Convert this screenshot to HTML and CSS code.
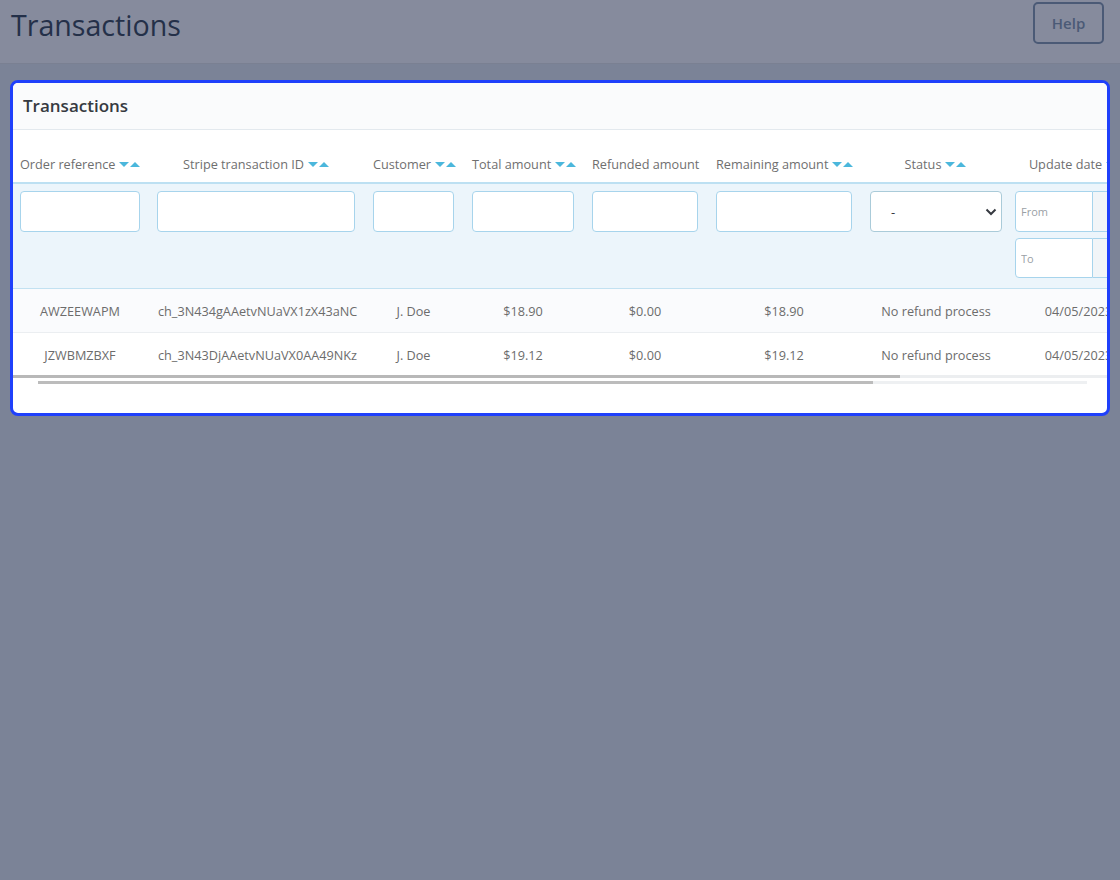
FILE: index.html
```html
<!DOCTYPE html>
<html lang="en">
<head>
    <meta charset="UTF-8">
    <title>Transactions</title>
    <link rel="stylesheet" href="styles.css">
</head>
<body>

    <header class="page-head">
        <h1>Transactions</h1>
        <button class="help-btn">Help</button>
    </header>

    <div class="content">
        <!-- Transactions panel -->
        <div class="panel">
            <div class="panel-heading">Transactions</div>

            <div class="table-wrap">
                <table class="grid">
                    <colgroup>
                        <col class="c1"><col class="c2"><col class="c3"><col class="c4">
                        <col class="c5"><col class="c6"><col class="c7"><col class="c8">
                    </colgroup>
                    <thead>
                        <tr class="head-row">
                            <th class="first">Order reference<span class="sort"><i class="down"></i><i class="up"></i></span></th>
                            <th>Stripe transaction ID<span class="sort"><i class="down"></i><i class="up"></i></span></th>
                            <th>Customer<span class="sort"><i class="down"></i><i class="up"></i></span></th>
                            <th>Total amount<span class="sort"><i class="down"></i><i class="up"></i></span></th>
                            <th>Refunded amount</th>
                            <th>Remaining amount<span class="sort"><i class="down"></i><i class="up"></i></span></th>
                            <th>Status<span class="sort"><i class="down"></i><i class="up"></i></span></th>
                            <th class="last">Update date<span class="sort"><i class="down"></i><i class="up"></i></span></th>
                        </tr>
                        <tr class="filter-row">
                            <td class="first"><input type="text"></td>
                            <td class="second"><input type="text"></td>
                            <td><input type="text"></td>
                            <td><input type="text"></td>
                            <td><input type="text"></td>
                            <td><input type="text"></td>
                            <td>
                                <div class="select">
                                    <span>-</span>
                                    <svg width="12" height="8" viewBox="0 0 12 8"><path d="M1.5 1.5 L6 6 L10.5 1.5" fill="none" stroke="#363a41" stroke-width="2"/></svg>
                                </div>
                            </td>
                            <td class="last">
                                <div class="date-stack">
                                    <div class="date-group">
                                        <input type="text" placeholder="From"><span class="addon"></span>
                                    </div>
                                    <div class="date-group">
                                        <input type="text" placeholder="To"><span class="addon"></span>
                                    </div>
                                </div>
                            </td>
                        </tr>
                    </thead>
                    <tbody>
                        <tr class="odd">
                            <td class="first">AWZEEWAPM</td>
                            <td>ch_3N434gAAetvNUaVX1zX43aNC</td>
                            <td>J. Doe</td>
                            <td>$18.90</td>
                            <td>$0.00</td>
                            <td>$18.90</td>
                            <td>No refund process</td>
                            <td class="last">04/05/2023</td>
                        </tr>
                        <tr>
                            <td class="first">JZWBMZBXF</td>
                            <td>ch_3N43DjAAetvNUaVX0AA49NKz</td>
                            <td>J. Doe</td>
                            <td>$19.12</td>
                            <td>$0.00</td>
                            <td>$19.12</td>
                            <td>No refund process</td>
                            <td class="last">04/05/2023</td>
                        </tr>
                    </tbody>
                </table>
            </div>

            <!-- scrollbars -->
            <div class="scroll-outer"><div class="thumb"></div></div>
            <div class="scroll-inner"><div class="thumb"></div></div>
        </div>
    </div>

</body>
</html>
```

FILE: styles.css
```css
* {
    margin: 0;
    padding: 0;
    box-sizing: border-box;
}

body {
    font-family: "Open Sans", "Noto Sans", sans-serif;
    background-color: #7b8397;
    min-height: 100vh;
}

/* Page header */
.page-head {
    height: 64px;
    background-color: #868b9d;
    border-bottom: 1px solid #7a8092;
    display: flex;
    justify-content: space-between;
    align-items: flex-start;
    padding: 0 16px 0 11px;
}

.page-head h1 {
    font-size: 28.6px;
    font-weight: 400;
    color: #243049;
    line-height: 48px;
    margin-top: 1px;
}

.help-btn {
    margin-top: 2px;
    width: 71px;
    height: 42px;
    border: 2px solid #4b5a76;
    border-radius: 5px;
    background: transparent;
    color: #4b5a76;
    font-family: inherit;
    font-size: 15px;
    font-weight: 600;
}

.content {
    padding: 16px 10px;
}

/* Panel */
.panel {
    background-color: #fff;
    border: 3px solid #1f40fb;
    border-radius: 8px;
    overflow: hidden;
    padding-bottom: 29px;
}

.panel-heading {
    height: 47px;
    background-color: #fafbfc;
    border-bottom: 1px solid #e3e9ee;
    padding: 0 10px;
    font-size: 17px;
    font-weight: 600;
    color: #363a41;
    line-height: 46px;
}

.table-wrap {
    overflow: hidden;
}

.grid {
    table-layout: fixed;
    width: 1138px;
    border-collapse: collapse;
    font-size: 12.7px;
    color: #6c6c6c;
}

.c1 { width: 136px; }
.c2 { width: 215px; }
.c3 { width: 99px; }
.c4 { width: 120px; }
.c5 { width: 124px; }
.c6 { width: 154px; }
.c7 { width: 150px; }
.c8 { width: 140px; }

.grid th, .grid td {
    padding: 0 9px;
    text-align: center;
    white-space: nowrap;
}

.grid .first {
    padding-left: 7px;
}

.grid .last {
    padding-left: 4px;
}

.filter-row .second {
    padding-left: 8px;
}

.head-row th {
    height: 53px;
    vertical-align: bottom;
    padding-bottom: 9px;
    font-weight: 400;
    color: #6f6f6f;
    border-bottom: 2px solid #bde0f2;
}

/* sort arrows */
.sort {
    display: inline-block;
    margin-left: 4px;
    vertical-align: 2px;
}

.sort i {
    display: inline-block;
    width: 0;
    height: 0;
    border-left: 5px solid transparent;
    border-right: 5px solid transparent;
    margin-right: 1px;
}

.sort .down {
    border-top: 5px solid #4bb7dc;
}

.sort .up {
    border-bottom: 5px solid #4bb7dc;
}

/* filters */
.filter-row td {
    background-color: #ecf5fb;
    vertical-align: top;
    padding-top: 7px;
    padding-bottom: 10px;
    border-bottom: 1px solid #c2e1f1;
}

.filter-row input {
    display: block;
    width: 100%;
    height: 41px;
    border: 1px solid #a7d4ec;
    border-radius: 4px;
    background: #fff;
    font-family: inherit;
    font-size: 11px;
    padding: 0 5px;
    outline: none;
}

.filter-row input::placeholder {
    color: #9aa0a5;
}

.select {
    height: 41px;
    border: 1px solid #aacbd9;
    border-radius: 4px;
    background: #fff;
    display: flex;
    align-items: center;
    justify-content: space-between;
    padding: 0 4px 0 20px;
    font-size: 13px;
    color: #363a41;
}

.date-stack {
    display: flex;
    flex-direction: column;
    gap: 6px;
}

.date-group {
    display: flex;
    width: 110px;
}

.date-group input {
    width: 78px;
    flex-shrink: 0;
    border-radius: 4px 0 0 4px;
    height: 41px;
}

.date-group + .date-group input,
.date-group + .date-group .addon {
    height: 40px;
}

.date-group .addon {
    flex: 1;
    height: 41px;
    background: #f1f5f8;
    border: 1px solid #a7d4ec;
    border-left: none;
}

/* rows */
tbody td {
    height: 44px;
    border-bottom: 1px solid #ebeef1;
}

tbody tr.odd td {
    background-color: #fafbfd;
}

/* scrollbars */
.scroll-outer {
    height: 3px;
    margin-top: -2px;
    background-color: #eceef0;
}

.scroll-outer .thumb {
    width: 887px;
    height: 3px;
    background-color: #b8b8b8;
}

.scroll-inner {
    height: 3px;
    margin: 3px 20px 0 25px;
    background-color: #eef0f2;
}

.scroll-inner .thumb {
    width: 835px;
    height: 3px;
    background-color: #bcbcbc;
}
```
